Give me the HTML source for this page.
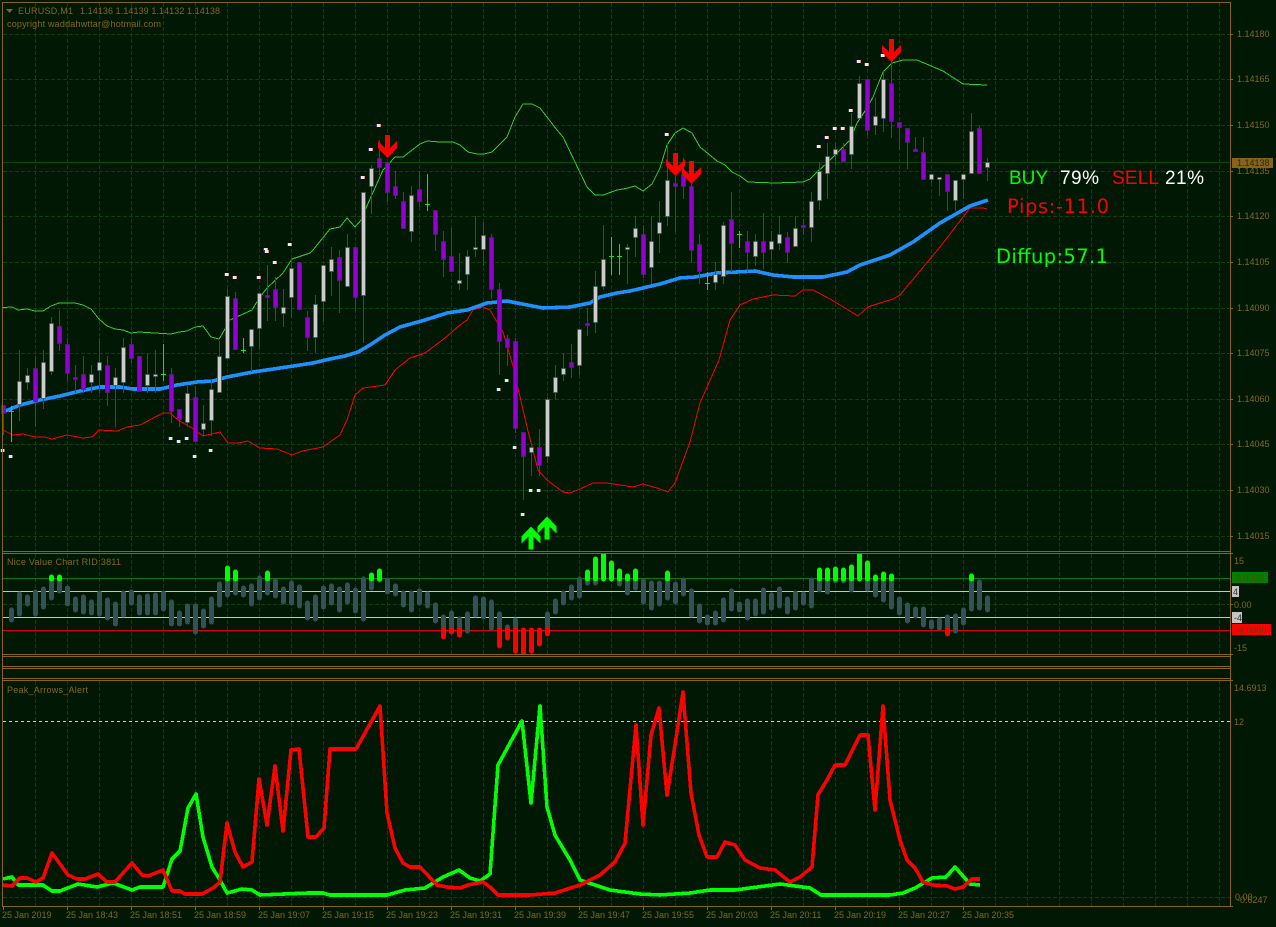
<!DOCTYPE html>
<html>
<head>
<meta charset="utf-8">
<title>EURUSD,M1</title>
<style>
html,body{margin:0;padding:0;background:#011904;width:1276px;height:927px;overflow:hidden}
svg{display:block;position:absolute;left:0;top:0}
text{font-family:"Liberation Sans",sans-serif;font-size:9px;fill:#86661a}
.b{font-size:19px}
.d{font-family:"DejaVu Sans",sans-serif;font-size:19.5px}
</style>
</head>
<body>
<svg width="1276" height="927" viewBox="0 0 1276 927" xmlns="http://www.w3.org/2000/svg">
<defs>
<clipPath id="p1"><rect x="3" y="3" width="1227" height="548"/></clipPath>
<clipPath id="p2"><rect x="3" y="554" width="1227" height="100"/></clipPath>
<clipPath id="p5"><rect x="3" y="681" width="1227" height="225"/></clipPath>
<g id="u"><rect x="-3" y="-1" width="1" height="3" fill="#2a3f7a"/><rect x="-2" y="-1" width="3" height="3" fill="#ffe6dc"/><rect x="1" y="-1" width="1" height="3" fill="#e8905a"/></g>
<g id="l"><rect x="-3" y="-1" width="1" height="3" fill="#1c4a5c"/><rect x="-2" y="-1" width="3" height="3" fill="#cfefff"/><rect x="1" y="-1" width="1" height="3" fill="#8a6a2a"/></g>
<path id="da" d="M-2.5 0H2.5V13L9.5 6V13L0 23L-9.5 13V6L-2.5 13Z" fill="#ff0000"/>
<path id="ua" d="M-2.5 24H2.5V11L9.5 18V11L0 1L-9.5 11V18L-2.5 11Z" fill="#00ff00"/>
</defs>

<rect width="1276" height="927" fill="#011904"/>

<!-- grid -->
<g stroke="#0c400d" stroke-width="1" stroke-dasharray="4 2" fill="none" shape-rendering="crispEdges">
<path clip-path="url(#p1)" d="M35.5 3V551M67.5 3V551M99.5 3V551M131.5 3V551M163.5 3V551M195.5 3V551M227.5 3V551M259.5 3V551M291.5 3V551M323.5 3V551M355.5 3V551M387.5 3V551M419.5 3V551M451.5 3V551M483.5 3V551M515.5 3V551M547.5 3V551M579.5 3V551M611.5 3V551M643.5 3V551M675.5 3V551M707.5 3V551M739.5 3V551M771.5 3V551M803.5 3V551M835.5 3V551M867.5 3V551M899.5 3V551M931.5 3V551M963.5 3V551M995.5 3V551M1027.5 3V551M1059.5 3V551M1091.5 3V551M1123.5 3V551M1155.5 3V551M1187.5 3V551M1219.5 3V551"/>
<path d="M3 34.5H1230M3 79.5H1230M3 125.5H1230M3 171.5H1230M3 216.5H1230M3 262.5H1230M3 308.5H1230M3 353.5H1230M3 399.5H1230M3 444.5H1230M3 490.5H1230M3 536.5H1230"/>
<path d="M35.5 554V654M67.5 554V654M99.5 554V654M131.5 554V654M163.5 554V654M195.5 554V654M227.5 554V654M259.5 554V654M291.5 554V654M323.5 554V654M355.5 554V654M387.5 554V654M419.5 554V654M451.5 554V654M483.5 554V654M515.5 554V654M547.5 554V654M579.5 554V654M611.5 554V654M643.5 554V654M675.5 554V654M707.5 554V654M739.5 554V654M771.5 554V654M803.5 554V654M835.5 554V654M867.5 554V654M899.5 554V654M931.5 554V654M963.5 554V654M995.5 554V654M1027.5 554V654M1059.5 554V654M1091.5 554V654M1123.5 554V654M1155.5 554V654M1187.5 554V654M1219.5 554V654M3 604.5H1230"/>
<path d="M35.5 681V906M67.5 681V906M99.5 681V906M131.5 681V906M163.5 681V906M195.5 681V906M227.5 681V906M259.5 681V906M291.5 681V906M323.5 681V906M355.5 681V906M387.5 681V906M419.5 681V906M451.5 681V906M483.5 681V906M515.5 681V906M547.5 681V906M579.5 681V906M611.5 681V906M643.5 681V906M675.5 681V906M707.5 681V906M739.5 681V906M771.5 681V906M803.5 681V906M835.5 681V906M867.5 681V906M899.5 681V906M931.5 681V906M963.5 681V906M995.5 681V906M1027.5 681V906M1059.5 681V906M1091.5 681V906M1123.5 681V906M1155.5 681V906M1187.5 681V906M1219.5 681V906M3 897.5H1230"/>
</g>

<!-- price line -->
<path d="M3 162.5H1230" stroke="#064a06" stroke-width="1" shape-rendering="crispEdges"/>

<!-- bollinger upper -->
<polyline fill="none" stroke="#32cd32" stroke-width="1" shape-rendering="crispEdges" points="3,307.5 12,307 18,310 27,309 35,311 43,311 51,306 59,303 75,303 83,305 91,309 99,319 107,326 115,329 123,330 131,333 139,332 155,333 171,334 179,332 187,331 195,327 203,326 211,337 219,339 221,336 230,320 252,310 260,297 267,288 283,273 292,259 310,253 313,250 330,229 340,227 347,218 355,227 362,219 366,208 383,170 395,157 403,157 420,144 427,141 440,142 453,142 460,145 468,152 477,154 484,154 492,152 507,137 515,117 523,104 532,104 540,108 557,130 563,137 587,187 595,195 603,195 617,190 628,188 635,186 643,191 652,184 660,168 667,145 675,133 683,128 692,133 700,147 717,161 725,165 732,172 740,176 748,182 775,183 803,182 810,179 817,172 827,163 850,140 857,123 867,108 873,97 883,72 892,63 903,60 917,60 943,71 963,84 987,85"/>
<!-- bollinger lower -->
<polyline fill="none" stroke="#ff0000" stroke-width="1" shape-rendering="crispEdges" points="3,430 13,435 23,434 35,437 45,437 52,439 67,435 83,438 92,437 99,430 117,431 127,427 140,425 163,413 170,413 178,420 192,428 203,436 220,432 228,443 238,443 248,441 260,448 277,449 292,455 302,451 323,447 330,442 340,435 347,420 355,395 363,388 385,385 395,370 410,358 425,353 445,338 460,325 467,320 473,310 483,307 490,310 497,322 503,332 513,366 518,388 527,427 538,470 547,480 563,492 570,493 580,489 593,483 607,483 633,487 643,484 657,488 668,492 675,483 690,442 700,403 719,360 730,320 740,305 753,299 773,295 795,296 803,290 813,290 830,299 845,308 858,316 868,307 880,303 893,299 900,295 940,247 970,208 983,208 987,209"/>
<!-- MA -->
<polyline fill="none" stroke="#1e90ff" stroke-width="3.6" stroke-linejoin="round" shape-rendering="crispEdges" points="3,412 20,405 40,400 60,396 80,391 100,387 120,387 133,389 160,389 177,385 197,382 213,381 227,377 253,372 287,367 313,363 330,359 345,356 358,352 370,345 385,335 400,327 425,320 447,313 467,310 487,303 507,301 517,303 543,308 570,307 590,303 600,297 617,293 630,291 660,284 680,278 695,277 717,273 737,272 755,271 773,275 793,277 823,277 847,272 860,265 890,255 913,242 940,223 970,206 988,200"/>

<!-- wicks -->
<path fill="none" stroke="#2f4f4f" stroke-width="1" shape-rendering="crispEdges" d="M3.5 405V435M19.5 350V421M27.5 368V390M35.5 356V427M43.5 350V409M51.5 317V375M59.5 310V351M67.5 338V381M75.5 365V393M83.5 356V393M91.5 365V393M99.5 338V393M107.5 356V406M115.5 368V427M123.5 338V393M131.5 338V363M139.5 356V392M147.5 353V393M155.5 350V393M171.5 368V423M179.5 409V427M187.5 386V427M195.5 386V442M203.5 405V436M211.5 380V436M219.5 341V393M227.5 289V359M235.5 292V350M251.5 329V372M259.5 293V350M267.5 265V321M275.5 277V321M283.5 289V327M291.5 259V318M299.5 262V310M307.5 311V351M315.5 295V353M323.5 265V322M331.5 247V296M339.5 250V313M347.5 234V287M355.5 247V311M363.5 192V343M371.5 165V214M379.5 140V175M387.5 162V202M395.5 171V199M403.5 192V229M411.5 186V242M419.5 171V207M435.5 210V251M443.5 231V277M451.5 228V272M459.5 253V290M467.5 250V290M475.5 216V257M483.5 222V266M491.5 234V299M499.5 283V375M507.5 335V366M515.5 338V433M523.5 432V500M531.5 447V476M539.5 429V476M547.5 397V463M555.5 365V400M563.5 353V381M571.5 344V378M579.5 329V375M587.5 308V336M595.5 271V333M603.5 225V290M627.5 244V284M635.5 216V257M643.5 225V278M651.5 216V284M659.5 201V253M667.5 143V226M675.5 163V232M683.5 158V199M691.5 170V263M699.5 234V284M715.5 262V290M723.5 222V284M731.5 192V272M747.5 231V272M755.5 234V266M763.5 213V269M771.5 231V260M779.5 216V250M787.5 232V263M795.5 216V247M803.5 219V235M811.5 192V242M819.5 162V210M827.5 143V199M835.5 143V165M843.5 143V162M851.5 113V169M859.5 76V119M867.5 79V135M875.5 98V135M883.5 70V132M891.5 55V138M899.5 122V150M907.5 128V169M915.5 137V152M923.5 137V180M931.5 174V183M939.5 177V196M947.5 174V211M955.5 180V211M963.5 174V199M971.5 113V174M979.5 125V174M987.5 158V181"/>

<!-- light bodies -->
<path fill="#cdcdcd" stroke="#3a5a5a" stroke-width="0.8" d="M17.5 381.5h4V404.5h-4zM25.5 375.5h4V382.5h-4zM41.5 362.5h4V398.5h-4zM49.5 323.5h4V371.5h-4zM89.5 374.5h4V382.5h-4zM97.5 362.5h4V370.5h-4zM113.5 377.5h4V385.5h-4zM121.5 347.5h4V382.5h-4zM145.5 374.5h4V385.5h-4zM153.5 374.5h4V376.5h-4zM185.5 393.5h4V422.5h-4zM201.5 423.5h4V429.5h-4zM209.5 389.5h4V420.5h-4zM217.5 356.5h4V392.5h-4zM225.5 296.5h4V358.5h-4zM249.5 329.5h4V346.5h-4zM257.5 293.5h4V328.5h-4zM281.5 307.5h4V313.5h-4zM289.5 268.5h4V297.5h-4zM313.5 304.5h4V337.5h-4zM321.5 265.5h4V301.5h-4zM329.5 259.5h4V271.5h-4zM345.5 247.5h4V286.5h-4zM361.5 192.5h4V295.5h-4zM369.5 168.5h4V186.5h-4zM409.5 195.5h4V231.5h-4zM457.5 280.5h4V283.5h-4zM465.5 256.5h4V274.5h-4zM473.5 247.5h4V249.5h-4zM481.5 235.5h4V249.5h-4zM529.5 447.5h4V452.5h-4zM545.5 399.5h4V456.5h-4zM553.5 377.5h4V392.5h-4zM561.5 368.5h4V374.5h-4zM577.5 329.5h4V365.5h-4zM593.5 286.5h4V322.5h-4zM601.5 259.5h4V286.5h-4zM625.5 247.5h4V249.5h-4zM633.5 228.5h4V237.5h-4zM649.5 241.5h4V267.5h-4zM657.5 222.5h4V233.5h-4zM665.5 180.5h4V216.5h-4zM713.5 274.5h4V282.5h-4zM721.5 225.5h4V276.5h-4zM753.5 241.5h4V256.5h-4zM769.5 241.5h4V249.5h-4zM777.5 234.5h4V243.5h-4zM793.5 228.5h4V246.5h-4zM809.5 201.5h4V227.5h-4zM817.5 171.5h4V200.5h-4zM825.5 156.5h4V173.5h-4zM833.5 149.5h4V154.5h-4zM849.5 126.5h4V154.5h-4zM857.5 83.5h4V118.5h-4zM873.5 116.5h4V125.5h-4zM881.5 79.5h4V118.5h-4zM929.5 174.5h4V179.5h-4zM937.5 177.5h4V179.5h-4zM953.5 180.5h4V200.5h-4zM961.5 174.5h4V179.5h-4zM969.5 131.5h4V173.5h-4zM985.5 162.5h4V167.5h-4z"/>
<!-- purple bodies -->
<path fill="#9400d3" stroke="#40305a" stroke-width="0.8" d="M1.5 405.5h4V413.5h-4zM33.5 368.5h4V401.5h-4zM57.5 326.5h4V343.5h-4zM65.5 344.5h4V373.5h-4zM73.5 377.5h4V379.5h-4zM81.5 374.5h4V389.5h-4zM105.5 365.5h4V392.5h-4zM129.5 344.5h4V358.5h-4zM137.5 356.5h4V391.5h-4zM169.5 374.5h4V411.5h-4zM177.5 409.5h4V419.5h-4zM193.5 397.5h4V441.5h-4zM233.5 298.5h4V349.5h-4zM265.5 295.5h4V297.5h-4zM273.5 289.5h4V307.5h-4zM297.5 262.5h4V309.5h-4zM305.5 317.5h4V337.5h-4zM337.5 257.5h4V280.5h-4zM353.5 247.5h4V297.5h-4zM377.5 158.5h4V167.5h-4zM385.5 162.5h4V192.5h-4zM393.5 186.5h4V195.5h-4zM401.5 201.5h4V228.5h-4zM417.5 189.5h4V201.5h-4zM433.5 210.5h4V234.5h-4zM441.5 241.5h4V259.5h-4zM449.5 256.5h4V271.5h-4zM489.5 237.5h4V289.5h-4zM497.5 289.5h4V341.5h-4zM505.5 338.5h4V347.5h-4zM513.5 341.5h4V428.5h-4zM521.5 432.5h4V456.5h-4zM537.5 447.5h4V465.5h-4zM569.5 362.5h4V367.5h-4zM585.5 323.5h4V325.5h-4zM641.5 234.5h4V274.5h-4zM673.5 183.5h4V186.5h-4zM681.5 174.5h4V186.5h-4zM689.5 186.5h4V250.5h-4zM697.5 244.5h4V271.5h-4zM729.5 219.5h4V243.5h-4zM745.5 241.5h4V252.5h-4zM761.5 241.5h4V252.5h-4zM785.5 237.5h4V252.5h-4zM801.5 225.5h4V227.5h-4zM841.5 149.5h4V161.5h-4zM865.5 79.5h4V130.5h-4zM889.5 83.5h4V121.5h-4zM897.5 122.5h4V127.5h-4zM905.5 128.5h4V142.5h-4zM913.5 149.5h4V151.5h-4zM921.5 152.5h4V179.5h-4zM945.5 174.5h4V191.5h-4zM977.5 128.5h4V173.5h-4z"/>
<!-- green dojis -->
<path fill="none" stroke="#14e614" stroke-width="1" shape-rendering="crispEdges" d="M11.5 406V442M9 411.5h5M163.5 344V381M161 374.5h5M243.5 338V353M241 350.5h5M427.5 174V211M425 204.5h5M611.5 237V275M609 256.5h5M619.5 244V275M617 256.5h5M707.5 272V290M705 283.5h5M739.5 231V248M737 234.5h5"/>

<!-- dots -->
<use href="#u" x="266" y="249"/><use href="#u" x="290" y="244"/><use href="#u" x="227" y="274"/><use href="#u" x="235" y="277"/><use href="#u" x="259" y="277"/><use href="#u" x="267" y="251"/><use href="#u" x="275" y="262"/><use href="#u" x="363" y="177"/><use href="#u" x="371" y="149"/><use href="#u" x="379" y="125"/><use href="#u" x="667" y="134"/><use href="#u" x="819" y="146"/><use href="#u" x="827" y="137"/><use href="#u" x="835" y="128"/><use href="#u" x="843" y="128"/><use href="#u" x="851" y="110"/><use href="#u" x="859" y="61"/><use href="#u" x="867" y="64"/><use href="#u" x="883" y="55"/>
<use href="#l" x="3" y="450"/><use href="#l" x="11" y="456"/><use href="#l" x="171" y="438"/><use href="#l" x="179" y="441"/><use href="#l" x="187" y="438"/><use href="#l" x="195" y="456"/><use href="#l" x="211" y="450"/><use href="#l" x="499" y="389"/><use href="#l" x="507" y="380"/><use href="#l" x="515" y="447"/><use href="#l" x="523" y="514"/><use href="#l" x="531" y="490"/><use href="#l" x="539" y="490"/>

<!-- arrows -->
<use href="#da" x="387.5" y="135"/><use href="#da" x="675.5" y="153"/><use href="#da" x="691.5" y="161"/><use href="#da" x="891.5" y="39"/>
<use href="#ua" x="531" y="525.5"/><use href="#ua" x="547" y="515.5"/>

<!-- panel 2 levels -->
<g stroke-width="1" shape-rendering="crispEdges" fill="none">
<path d="M3 578.5H1230" stroke="#0a780a"/>
<path d="M3 591.5H1230M3 617.5H1230" stroke="#c4c4c4"/>
<path d="M3 630.5H1230" stroke="#e00000"/>
</g>

<!-- panel 2 bars -->
<g clip-path="url(#p2)" fill="none" stroke-width="5" stroke-linecap="round">
<path stroke="#325258" d="M11.5 610V620M19.5 594V614M27.5 597V604M35.5 592V614M43.5 589V607M51.5 578V598M59.5 578V591M67.5 588V604M75.5 599V610M83.5 597V612M91.5 602V613M99.5 593V614M107.5 600V618M115.5 604V624M123.5 593V615M131.5 592V603M139.5 597V613M147.5 596V613M155.5 595V613M163.5 593V609M171.5 602V624M179.5 613V624M187.5 606V622M195.5 606V632M203.5 611V626M211.5 599V622M219.5 584V605M227.5 578V595M235.5 578V593M243.5 588V595M251.5 586V604M259.5 578V598M267.5 578V593M275.5 581V596M283.5 589V602M291.5 583V603M299.5 587V606M307.5 603V618M315.5 597V619M323.5 588V607M331.5 586V603M339.5 589V610M347.5 585V602M355.5 590V611M363.5 579V619M371.5 578V588M379.5 578V580M387.5 580V592M395.5 586V594M403.5 593V605M411.5 593V610M419.5 591V603M427.5 594V606M435.5 605V621M443.5 617V630M451.5 613V630M459.5 619V630M467.5 614V631M475.5 598V615M483.5 599V617M491.5 602V628M499.5 614V630M507.5 627V630M515.5 620V630M547.5 614V630M555.5 601V612M563.5 593V603M571.5 587V598M579.5 579V596M587.5 578V583M595.5 578V583M619.5 578V584M627.5 578V593M635.5 578V588M643.5 581V602M651.5 583V608M659.5 583V604M667.5 578V598M675.5 584V602M683.5 580V594M691.5 591V615M699.5 606V621M707.5 617V623M715.5 613V623M723.5 600V620M731.5 591V609M739.5 604V610M747.5 601V618M755.5 601V614M763.5 590V612M771.5 595V608M779.5 589V606M787.5 599V612M795.5 593V608M803.5 594V603M811.5 580V606M819.5 578V590M827.5 578V592M835.5 578V581M843.5 578V581M851.5 578V590M867.5 578V589M875.5 578V595M883.5 578V600M891.5 578V607M899.5 599V613M907.5 605V621M915.5 609V616M923.5 609V625M931.5 622V627M939.5 620V628M947.5 617V630M955.5 616V631M963.5 610V623M971.5 578V609M979.5 582V608M987.5 598V610"/>
<path stroke="#00ff00" d="M51.5 577V579M59.5 577V579M227.5 568V579M235.5 572V579M267.5 573V579M371.5 575V579M379.5 571V579M587.5 572V579M595.5 559V579M603.5 551V579M611.5 563V579M619.5 571V579M627.5 576V579M635.5 571V579M667.5 573V579M819.5 570V579M827.5 570V579M835.5 569V579M843.5 570V579M851.5 567V579M859.5 551V579M867.5 563V579M875.5 577V579M883.5 574V579M891.5 576V579M971.5 576V579"/>
<path stroke="#ff0000" d="M443.5 630V637M451.5 630V632M459.5 630V635M499.5 630V646M507.5 630V638M515.5 630V651M523.5 630V660M531.5 630V651M539.5 630V644M547.5 630V634M947.5 630V634"/>
</g>

<!-- panel 5 dashed -->
<path d="M3 721.5H1230" stroke="#cfcfcf" stroke-width="1" stroke-dasharray="3 3" shape-rendering="crispEdges"/>
<g clip-path="url(#p5)" fill="none" stroke-width="3.6" stroke-linejoin="round" shape-rendering="crispEdges">
<polyline stroke="#00ff00" points="3,879 12,877 18,885 35,885 43,885 52,891 60,891 78,884 97,887 113,883 132,890 140,887 157,887 163,887 172,859 180,851 188,808 196,794 203,837 212,867 220,880 227,893 242,889 252,890 260,895 308,893 323,893 330,895 387,895 405,890 425,888 443,877 459,870 470,878 480,881 490,874 498,765 522,721 531,803 540,706 547,807 555,835 570,860 580,880 595,885 610,890 640,894 660,895 690,893 710,890 735,890 750,888 780,884 795,886 810,888 821,895 890,895 903,893 915,888 932,878 946,877 955,867 970,884 980,885"/>
<polyline stroke="#ff0000" points="3,885 12,886 20,878 27,878 36,882 43,878 52,853 68,875 77,879 85,879 98,874 107,882 115,882 132,863 142,875 148,876 163,870 172,891 180,891 185,894 202,894 213,888 220,882 227,823 235,852 243,867 252,862 259,779 267,825 275,766 283,831 291,750 299,749 308,837 316,837 324,828 330,749 356,749 380,706 387,813 395,848 403,863 410,867 420,867 437,885 447,887 460,888 468,885 483,882 490,887 498,895 530,895 555,893 580,885 600,875 615,862 625,843 636,725 643,825 651,735 659,708 667,795 675,745 683,692 691,793 699,835 707,857 717,857 725,842 735,845 745,860 760,868 775,870 790,882 800,877 812,867 818,795 827,780 835,765 845,765 860,735 868,735 875,810 883,706 890,800 900,840 907,860 915,868 923,882 933,885 947,886 955,889 963,887 972,879 980,879"/>
</g>

<!-- frames -->
<g fill="none" stroke="#86641a" stroke-width="1" shape-rendering="crispEdges">
<path d="M2.5 2.5H1230.5V906.5H2.5Z"/>
<path d="M2.5 551.5H1230.5M2.5 553.5H1230.5M2.5 654.5H1230.5M2.5 656.5H1230.5M2.5 666.5H1230.5M2.5 668.5H1230.5M2.5 678.5H1230.5M2.5 680.5H1230.5"/>
<path d="M3.5 907V910M67.5 907V910M131.5 907V910M195.5 907V910M259.5 907V910M323.5 907V910M387.5 907V910M451.5 907V910M515.5 907V910M579.5 907V910M643.5 907V910M707.5 907V910M771.5 907V910M835.5 907V910M899.5 907V910M963.5 907V910"/>
<path d="M1231 34.5h2M1231 79.5h2M1231 125.5h2M1231 171.5h2M1231 216.5h2M1231 262.5h2M1231 308.5h2M1231 353.5h2M1231 399.5h2M1231 444.5h2M1231 490.5h2M1231 536.5h2M1231 553.5h2M1231 604.5h2M1231 654.5h2M1231 680.5h2M1231 906.5h2"/>
</g>

<!-- titles -->
<polygon points="6,9 13,9 9.5,13" fill="#86661a"/>
<text x="18" y="14" textLength="55">EURUSD,M1</text>
<text x="80" y="14" textLength="140">1.14136 1.14139 1.14132 1.14138</text>
<text x="7" y="27" textLength="154">copyright waddahwttar@hotmail.com</text>
<text x="7" y="565" textLength="114">Nice Value Chart RID:3811</text>
<text x="7" y="693" textLength="81">Peak_Arrows_Alert</text>

<!-- main axis -->
<text x="1237" y="37">1.14180</text>
<text x="1237" y="82">1.14165</text>
<text x="1237" y="128">1.14150</text>
<text x="1237" y="174">1.14135</text>
<text x="1237" y="219">1.14120</text>
<text x="1237" y="265">1.14105</text>
<text x="1237" y="311">1.14090</text>
<text x="1237" y="356">1.14075</text>
<text x="1237" y="402">1.14060</text>
<text x="1237" y="447">1.14045</text>
<text x="1237" y="493">1.14030</text>
<text x="1237" y="539">1.14015</text>
<rect x="1232" y="158" width="41" height="10" fill="#86641a"/>
<text x="1237" y="166" style="fill:#2e2808">1.14138</text>

<!-- panel 2 axis -->
<text x="1234" y="564">15</text>
<rect x="1232" y="572" width="36" height="11" fill="#008000"/>
<text x="1236" y="581" style="fill:#4a4a08">8.0000</text>
<rect x="1232" y="586" width="7" height="11" fill="#c4c4c4"/>
<text x="1233" y="595" style="fill:#33302a">4</text>
<text x="1234" y="608">0.00</text>
<rect x="1232" y="612" width="10" height="11" fill="#c4c4c4"/>
<text x="1234" y="621" style="fill:#33302a">-4</text>
<rect x="1232" y="624" width="39" height="11" fill="#ff0000"/>
<text x="1236" y="633" style="fill:#6a3a08">-8.0000</text>
<text x="1234" y="651">-15</text>

<!-- panel 5 axis -->
<text x="1234" y="691">14.6913</text>
<text x="1234" y="725">12</text>
<text x="1235" y="900">0.00</text>
<text x="1237" y="903">-0.6247</text>

<!-- time axis -->
<text x="2" y="918">25 Jan 2019</text>
<text x="66" y="918">25 Jan 18:43</text>
<text x="130" y="918">25 Jan 18:51</text>
<text x="194" y="918">25 Jan 18:59</text>
<text x="258" y="918">25 Jan 19:07</text>
<text x="322" y="918">25 Jan 19:15</text>
<text x="386" y="918">25 Jan 19:23</text>
<text x="450" y="918">25 Jan 19:31</text>
<text x="514" y="918">25 Jan 19:39</text>
<text x="578" y="918">25 Jan 19:47</text>
<text x="642" y="918">25 Jan 19:55</text>
<text x="706" y="918">25 Jan 20:03</text>
<text x="770" y="918">25 Jan 20:11</text>
<text x="834" y="918">25 Jan 20:19</text>
<text x="898" y="918">25 Jan 20:27</text>
<text x="962" y="918">25 Jan 20:35</text>

<!-- info labels -->
<text class="b" x="1009" y="184" textLength="39" style="fill:#00ff00">BUY</text>
<text class="b" x="1060" y="184" textLength="39" style="fill:#ffffff">79%</text>
<text class="b" x="1112" y="184" textLength="47" style="fill:#ff0000">SELL</text>
<text class="b" x="1165" y="184" textLength="39" style="fill:#ffffff">21%</text>
<text class="d" x="1007" y="213" textLength="102" style="fill:#ff0000">Pips:-11.0</text>
<text class="d" x="996" y="263" textLength="112" style="fill:#00ff00">Diffup:57.1</text>
</svg>
</body>
</html>
